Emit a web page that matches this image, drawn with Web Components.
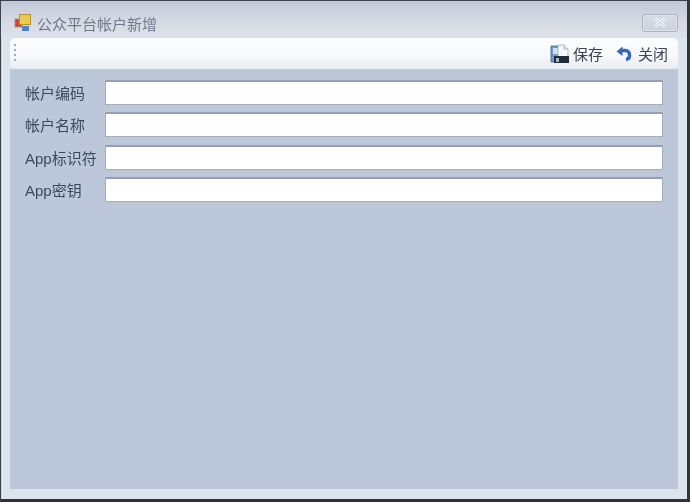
<!DOCTYPE html>
<html>
<head>
<meta charset="utf-8">
<style>
  html, body { margin: 0; height: 100%; background: #fff; }
  body { font-family: "Liberation Sans", "Noto Sans CJK SC", sans-serif; }
</style>
</head>
<body>
<form-window caption="公众平台帐户新增">
  <form-toolbar>
    <tool-button label="保存" icon="save"></tool-button>
    <tool-button label="关闭" icon="undo"></tool-button>
  </form-toolbar>
  <form-panel>
    <form-row label="帐户编码"></form-row>
    <form-row label="帐户名称"></form-row>
    <form-row label="App标识符"></form-row>
    <form-row label="App密钥"></form-row>
  </form-panel>
</form-window>

<script>
class FormWindow extends HTMLElement {
  constructor() {
    super();
    this.attachShadow({ mode: 'open' });
    this.shadowRoot.innerHTML = `
      <style>
        :host {
          display: block;
          box-sizing: border-box;
          width: 692px;
          height: 504px;
          padding: 0 0 2px 0;
          background: #fff;
        }
        .frame {
          box-sizing: border-box;
          height: 100%;
          width: 690px;
          display: flex;
          flex-direction: column;
          border: 1px solid #3c4452;
          border-right: 3px solid #2f343e;
          border-bottom: 3px solid #2f343e;
          background: #dde5ec;
          box-shadow: inset 1px 1px 0 #c3cad8, inset 2px 2px 0 #e9eef3;
          filter: blur(.45px); /* the reference is a soft, rescaled capture */
        }
        .title {
          flex: none;
          height: 37px;
          display: flex;
          align-items: center;
          gap: 5px;
          padding: 6px 9px 0 13px;
          box-sizing: border-box;
          background: linear-gradient(#c3c9d8, #d6dbe4 60%, #dde2ea);
          color: #6f7a8e;
          font-size: 15px;
        }
        .caption { flex: 1; position: relative; top: 1px; }
        .close {
          width: 36px;
          height: 18px;
          box-sizing: border-box;
          border: 1px solid #a9b3c2;
          border-radius: 3px;
          background: linear-gradient(#d6dbe4, #ccd3de);
          box-shadow: inset 0 0 0 1px #dfe4ea;
          display: flex;
          align-items: center;
          justify-content: center;
        }
        .body {
          flex: 1;
          display: flex;
          flex-direction: column;
          padding: 0 9px 10px 9px;
          min-height: 0;
        }
      </style>
      <div class="frame">
        <div class="title">
          <svg width="18" height="18" viewBox="0 0 18 18">
            <rect x="1" y="5" width="7" height="8" fill="#c8463c" stroke="#b08a7a" stroke-width=".8"/>
            <rect x="5.500" y="0.500" width="11" height="10" fill="#eec94e" stroke="#b4932f"/>
            <rect x="8" y="12" width="7" height="5" fill="#4f82c6"/>
          </svg>
          <span class="caption">${this.getAttribute('caption')}</span>
          <div class="close">
            <svg width="14" height="11" viewBox="0 0 14 11">
              <path d="M2 1.500l10 8M12 1.500l-10 8" stroke="#f2f4f7" stroke-width="3" fill="none"/>
              <path d="M2 1.500l10 8M12 1.500l-10 8" stroke="#aab3c3" stroke-width=".6" fill="none"/>
            </svg>
          </div>
        </div>
        <div class="body"><slot></slot></div>
      </div>`;
  }
}

class FormToolbar extends HTMLElement {
  constructor() {
    super();
    this.attachShadow({ mode: 'open' });
    this.shadowRoot.innerHTML = `
      <style>
        :host {
          display: flex;
          flex: none;
          box-sizing: border-box;
          height: 31px;
          align-items: center;
          padding: 0 10px 0 4px;
          border-radius: 5px;
          background: linear-gradient(#fcfdfe, #f6f8fa 60%, #e8ecf1);
        }
        .grip {
          display: flex;
          flex-direction: column;
          gap: 3px;
          margin: -3px auto 0 0;
        }
        .grip i { width: 2px; height: 2px; background: #a2abba; }
        .tools { display: flex; gap: 12px; align-items: center; }
      </style>
      <div class="grip"><i></i><i></i><i></i><i></i></div>
      <div class="tools"><slot></slot></div>`;
  }
}

class ToolButton extends HTMLElement {
  constructor() {
    super();
    this.attachShadow({ mode: 'open' });
    const icons = {
      save: `<svg width="19" height="20" viewBox="0 0 19 20">
        <path d="M1 2h10v16H1z" fill="#6f9ccb" stroke="#3d6698" stroke-width=".8"/>
        <path d="M3 4h7v6H3z" fill="#cfe0f0"/>
        <path d="M8 1h6l4 4v10H8z" fill="#f4f7fb" stroke="#9aa9bd" stroke-width=".8"/>
        <path d="M14 1v4h4" fill="#dfe6ef" stroke="#9aa9bd" stroke-width=".8"/>
        <rect x="4" y="12" width="15" height="7" fill="#1f2a3a"/>
        <rect x="6" y="14" width="3" height="4" fill="#a9b8cb"/>
      </svg>`,
      undo: `<svg width="19" height="18" viewBox="0 0 19 18">
        <path d="M6 5.500h4.500a4 4 0 0 1 4 4v1a4 4 0 0 1-3.500 4" fill="none" stroke="#3568b8" stroke-width="3.400"/>
        <path d="M1.500 6.500L7.500 1.500v9.500z" fill="#3568b8"/>
      </svg>`
    };
    this.shadowRoot.innerHTML = `
      <style>
        :host {
          display: flex;
          align-items: center;
          gap: 4px;
          color: #3a4455;
          font-size: 15px;
        }
      </style>
      ${icons[this.getAttribute('icon')]}
      <span>${this.getAttribute('label')}</span>`;
  }
}

class FormPanel extends HTMLElement {
  constructor() {
    super();
    this.attachShadow({ mode: 'open' });
    this.shadowRoot.innerHTML = `
      <style>
        :host {
          display: flex;
          flex-direction: column;
          flex: 1;
          box-sizing: border-box;
          gap: 7.330px;
          padding: 11px 15px 0 15px;
          background: #bcc7d9;
        }
      </style>
      <slot></slot>`;
  }
}

class FormRow extends HTMLElement {
  constructor() {
    super();
    this.attachShadow({ mode: 'open' });
    this.shadowRoot.innerHTML = `
      <style>
        :host {
          display: flex;
          align-items: center;
          height: 25px;
          color: #3d4859;
          font-size: 15px;
        }
        label { flex: none; width: 80px; }
        input {
          flex: 1;
          min-width: 0;
          height: 25px;
          box-sizing: border-box;
          margin: 0;
          border: 1px solid #a4adbb;
          border-top: 2px solid #98a1af;
          background: #fff;
          outline: none;
        }
      </style>
      <label>${this.getAttribute('label')}</label>
      <input type="text">`;
  }
}

customElements.define('form-window', FormWindow);
customElements.define('form-toolbar', FormToolbar);
customElements.define('tool-button', ToolButton);
customElements.define('form-panel', FormPanel);
customElements.define('form-row', FormRow);
</script>
</body>
</html>
